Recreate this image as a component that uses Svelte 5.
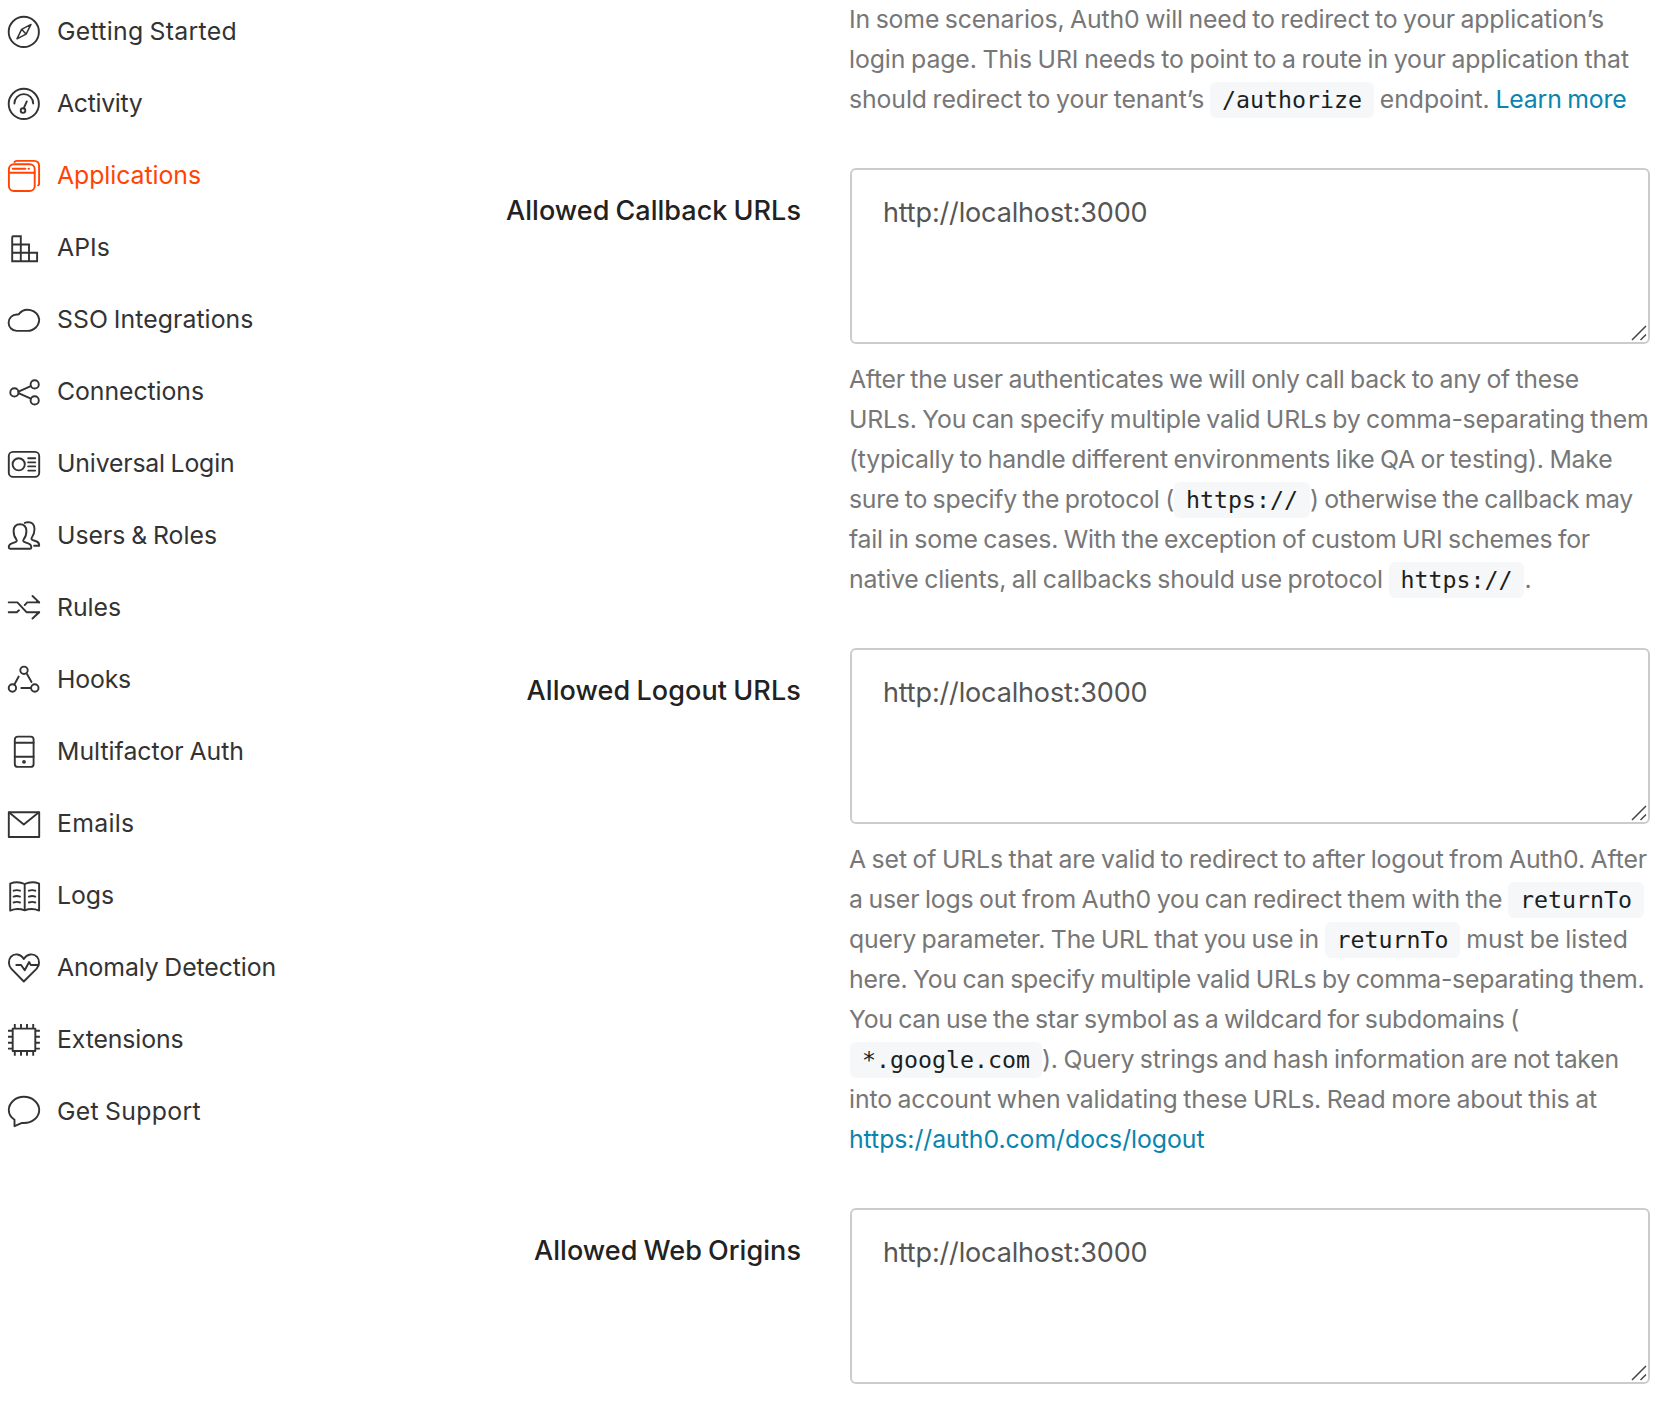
<script>
  // Spreads a run of text evenly so that it fills the given width.
  function fit(node, width) {
    if (!width) return;
    const natural = node.getBoundingClientRect().width;
    node.style.letterSpacing = `${(width - natural) / node.textContent.length}px`;
  }

  const nav = [
    { id: 'compass', label: 'Getting Started', w: 180 },
    { id: 'gauge', label: 'Activity', w: 85.5 },
    { id: 'windows', label: 'Applications', w: 144, active: true },
    { id: 'blocks', label: 'APIs', w: 53 },
    { id: 'cloud', label: 'SSO Integrations', w: 196.5 },
    { id: 'share', label: 'Connections', w: 147 },
    { id: 'card', label: 'Universal Login', w: 177.5 },
    { id: 'users', label: 'Users & Roles', w: 160 },
    { id: 'shuffle', label: 'Rules', w: 64 },
    { id: 'hooks', label: 'Hooks', w: 74 },
    { id: 'phone', label: 'Multifactor Auth', w: 187 },
    { id: 'mail', label: 'Emails', w: 77.5 },
    { id: 'book', label: 'Logs', w: 57 },
    { id: 'heart', label: 'Anomaly Detection', w: 219 },
    { id: 'chip', label: 'Extensions', w: 126.5 },
    { id: 'bubble', label: 'Get Support', w: 144 },
  ];

  const t = (text, w) => ({ text, w });
  const code = (text) => ({ text, kind: 'code' });
  const link = (text, w) => ({ text, w, kind: 'link' });

  const intro = [
    [t('In some scenarios, Auth0 will need to redirect to your application’s', 755)],
    [t('login page. This URI needs to point to a route in your application that', 780)],
    [t('should redirect to your tenant’s ', 361), code('/authorize'), t(' endpoint. ', 121.5), link('Learn more', 131)],
  ];

  const fields = [
    {
      label: 'Allowed Callback URLs', w: 295,
      help: [
        [t('After the user authenticates we will only call back to any of these', 730)],
        [t('URLs. You can specify multiple valid URLs by comma-separating them', 799.5)],
        [t('(typically to handle different environments like QA or testing). Make', 763.5)],
        [t('sure to specify the protocol (', 325), code('https://'), t(') otherwise the callback may', 323)],
        [t('fail in some cases. With the exception of custom URI schemes for', 741)],
        [t('native clients, all callbacks should use protocol ', 539.5), code('https://'), t('.')],
      ],
    },
    {
      label: 'Allowed Logout URLs', w: 274.5,
      help: [
        [t('A set of URLs that are valid to redirect to after logout from Auth0. After', 798)],
        [t('a user logs out from Auth0 you can redirect them with the ', 659), code('returnTo')],
        [t('query parameter. The URL that you use in ', 475.5), code('returnTo'), t(' must be listed', 167.5)],
        [t('here. You can specify multiple valid URLs by comma-separating them.', 795.5)],
        [t('You can use the star symbol as a wildcard for subdomains (', 670)],
        [code('*.google.com'), t('). Query strings and hash information are not taken', 577)],
        [t('into account when validating these URLs. Read more about this at', 748)],
        [link('https://auth0.com/docs/logout', 355.5)],
      ],
    },
    { label: 'Allowed Web Origins', w: 267, help: [] },
  ];
</script>

{#snippet icon(id)}
  <svg class="icon" viewBox="0 0 32 32" aria-hidden="true">
    {#if id === 'compass'}
      <circle cx="15.8" cy="15.9" r="15.1" />
      <path class="thin" d="M23 8.4 13.6 13.3 9 22.8 18.1 18.1ZM13.9 13.5l3.8 4.2" />
    {:else if id === 'gauge'}
      <circle cx="15.8" cy="15.9" r="15.1" />
      <path d="M6.4 15.5a9.4 9.4 0 0 1 18.8 0M18.8 13.4l-3.1 7" />
      <circle cx="15" cy="22.6" r="2.3" />
    {:else if id === 'windows'}
      <rect x="0.9" y="4.3" width="25.8" height="26.7" rx="5" />
      <path d="M.9 12.8h25.8M4.8 8.7h12.6M20.5 8.7h.5M6.4 1.9Q7.6.9 9.4.9H26q5.1 0 5.1 5.2v18.2l-1 1" />
    {:else if id === 'blocks'}
      <path class="square" d="M4.2 4.2h8.6v25M4.2 4.2v25h24.9v-8.5H4.2M4.2 12.5H21v16.7" />
    {:else if id === 'cloud'}
      <path d="M8.8 26.9a8.2 8.2 0 0 1 0-16.4q1 0 1.8-.2A11.6 11.6 0 0 1 31.2 15.3 11.6 11.6 0 0 1 19.6 26.9Z" />
    {:else if id === 'share'}
      <circle cx="6.4" cy="16.4" r="4.1" />
      <circle cx="26.7" cy="8.4" r="4.1" />
      <circle cx="26.7" cy="24.4" r="4.1" />
      <path d="M10.5 15.6l12.3-5.5M10.5 17.1l12.3 5.5" />
    {:else if id === 'card'}
      <rect x="0.8" y="3.9" width="30.4" height="25" rx="4.2" />
      <circle cx="10.7" cy="16.3" r="6.1" />
      <path d="M20.2 10.3h7M20.2 14.4h7M20.2 18.4h7M20.2 22.6h7" />
    {:else if id === 'users'}
      <path d="M2 28.7q-1.3 0-1.2-1.6.1-2.6 2.5-3.5l4-1.4q2.4-.9.9-3-2.7-3.4-2.6-8.2.2-6.8 6.4-6.8t6.4 6.8q.1 4.8-2.6 8.2-1.5 2.1.9 3l4 1.4q2.5 1 2.6 3.5.1 1.6-1.3 1.6Z" />
      <path d="M16.8 2.9q1.4-.8 3.400-.8 6.200.2 6.300 7 0 4.700-2.500 8.100-1.400 2.100.8 2.900l3.900 1.400q2.500.9 2.500 4.200h-5.100" />
    {:else if id === 'shuffle'}
      <path d="M.7 10.4h8.700l9.300 9.900h12.500l-6.700 6.200M.7 20.300h8.100l2.200-2M16.700 13.100l2.500-2.700h12L24.500 4" />
      <path d="M29 9.400l2 1M29 21.300l2-1" />
    {:else if id === 'hooks'}
      <circle cx="16" cy="6.300" r="3.700" />
      <circle cx="4.400" cy="24" r="3.700" />
      <circle cx="26.800" cy="24" r="3.700" />
      <path d="M10.700 12.500l-4.300 8M19 10l4.500 8M13.300 24h9.400" />
    {:else if id === 'phone'}
      <rect x="6.800" y="0.600" width="18.800" height="30.300" rx="3" />
      <path d="M6.800 6.800h18.800M6.800 20.700h18.800" />
      <circle class="dot" cx="16" cy="25.900" r="1.900" />
    {:else if id === 'mail'}
      <rect x="0.800" y="4.200" width="30.400" height="24.800" />
      <path d="M1.200 4.600l14.600 12 14.800-12" />
    {:else if id === 'book'}
      <path d="M2.200 3.600q7.400-2.800 14.500.4 7.100-3.200 14.400-.4v27q-7.300-3-14.400-.2-7.200-2.800-14.500.2ZM16.700 4v26.400" />
      <path d="M5.600 10.700q3.200-1.200 6.400 0M5.600 16.600q3.200-1.200 6.400 0M5.600 22.500q3.200-1.200 6.400 0M20.900 10.700q3.200-1.200 6.400 0M20.900 16.600q3.200-1.200 6.400 0M20.900 22.500q3.200-1.200 6.400 0" />
    {:else if id === 'heart'}
      <path d="M15.800 29.500 3.200 16.600C.2 13.200.3 8 2.700 5 6.300 1 12.500 1.500 15.800 7 19.200 1.500 25.600 1 29.200 5c2.500 3 2.500 8.200-.5 11.600Z" />
      <path d="M8.300 13h4.800l3.600 5.300 4.400-8.300 1.700 3h7.700" />
    {:else if id === 'chip'}
      <rect x="4.700" y="4.600" width="22.600" height="22.400" />
      <path class="square" d="M6.800 0v4M13 0v4M19 0v4M25.200 0v4M6.800 27v4.800M13 27v4.800M19 27v4.800M25.200 27v4.800M0 6.800h4M0 12.700h4M0 18.700h4M0 24.600h4M27.500 6.800h4.400M27.500 12.700h4.400M27.500 18.700h4.400M27.500 24.600h4.400" />
    {:else if id === 'bubble'}
      <path d="M6.500 30.200v-6.400C2.900 21.400.8 17.900.8 14 .8 6.700 7.500.8 15.900.8S31.200 6.700 31.200 14 24.300 27 15.900 27q-1 0-1.900-.1Z" />
    {/if}
  </svg>
{/snippet}

{#snippet paragraph(lines)}
  <div class="help">
    {#each lines as line}
      <div class="line">
        {#each line as part}
          {#if part.kind === 'code'}
            <code>{part.text}</code>
          {:else if part.kind === 'link'}
            <a class="run" href="#docs" use:fit={part.w}>{part.text}</a>
          {:else}
            <span class="run" use:fit={part.w}>{part.text}</span>
          {/if}
        {/each}
      </div>
    {/each}
  </div>
{/snippet}

<div class="page">
  <nav>
    {#each nav as item}
      <a class="item" class:active={item.active} href="#{item.id}">
        {@render icon(item.id)}
        <span class="name" use:fit={item.w}>{item.label}</span>
      </a>
    {/each}
  </nav>

  <main>
    <section class="row">
      <div></div>
      {@render paragraph(intro)}
    </section>
    {#each fields as field, i}
      <section class="row">
        <label for="field-{i}"><span use:fit={field.w}>{field.label}</span></label>
        <div class="control">
          <div class="box">
            <textarea id="field-{i}" spellcheck="false" value="http://localhost:3000"></textarea>
            <svg class="grip" viewBox="0 0 16 16" aria-hidden="true"><path d="M1 15 15 1M9.500 15 15 9.500" /></svg>
          </div>
          {#if field.help.length}
            {@render paragraph(field.help)}
          {/if}
        </div>
      </section>
    {/each}
  </main>
</div>

<style>
  :global(body) {
    background: #fff;
    overflow: hidden;
  }

  .page {
    display: flex;
    width: 1668px;
    height: 1406px;
    font-family: Inter, 'Liberation Sans', sans-serif;
    font-size: 24.8px;
    word-spacing: -1.2px;
  }

  a {
    text-decoration: none;
  }

  nav {
    display: flex;
    flex-direction: column;
    width: 450px;
    padding: 0 0 0 8px;
    margin-top: -4px;
    box-sizing: border-box;
  }

  .item {
    display: flex;
    align-items: center;
    gap: 17px;
    height: 72px;
    color: #333;
    white-space: nowrap;
  }

  .item.active {
    color: #ff4404;
  }

  .name {
    padding-bottom: 1.5px;
  }

  .icon {
    width: 32px;
    height: 32px;
    overflow: visible;
    fill: none;
    stroke: currentColor;
    stroke-width: 1.9;
    stroke-linecap: round;
    stroke-linejoin: round;
  }

  .icon .thin {
    stroke-width: 1.5;
  }

  .icon .square {
    stroke-linecap: butt;
    stroke-linejoin: miter;
  }

  .icon .dot {
    fill: currentColor;
    stroke: none;
  }

  main {
    display: flex;
    flex-direction: column;
    gap: 48px;
    width: 1200px;
  }

  .row {
    display: grid;
    grid-template-columns: 351px 800px;
    column-gap: 49px;
  }

  label {
    padding-top: 23px;
    font-size: 27px;
    font-weight: 500;
    line-height: 40px;
    color: #222;
    text-align: right;
    white-space: nowrap;
  }

  .control {
    display: flex;
    flex-direction: column;
    gap: 16px;
  }

  .box {
    position: relative;
    display: flex;
  }

  textarea {
    width: 800px;
    height: 176px;
    box-sizing: border-box;
    margin: 0;
    padding: 23px 31px;
    border: 2px solid #ccc;
    border-radius: 6px;
    outline: none;
    resize: none;
    background: #fff;
    color: #555;
    font: inherit;
    font-size: 27px;
    line-height: 40px;
    letter-spacing: -0.15px;
  }

  .grip {
    position: absolute;
    right: 3.500px;
    bottom: 3px;
    width: 16px;
    height: 16px;
    fill: none;
    stroke: #444;
    stroke-width: 1.5;
  }

  .help {
    margin-left: -1px;
    color: #777;
  }

  .line {
    display: flex;
    align-items: center;
    height: 40px;
    white-space: pre;
  }

  .run {
    flex: none;
    padding-bottom: 1.5px;
  }

  .line a {
    color: #0a84ae;
  }

  code {
    flex: none;
    height: 36px;
    padding: 0 12px;
    border-radius: 6px;
    background: #f5f7f9;
    color: #1c1e20;
    font-family: 'DejaVu Sans Mono', monospace;
    font-size: 23.250px;
    line-height: 36px;
  }

  code:first-child {
    margin-left: 1px;
  }
</style>
